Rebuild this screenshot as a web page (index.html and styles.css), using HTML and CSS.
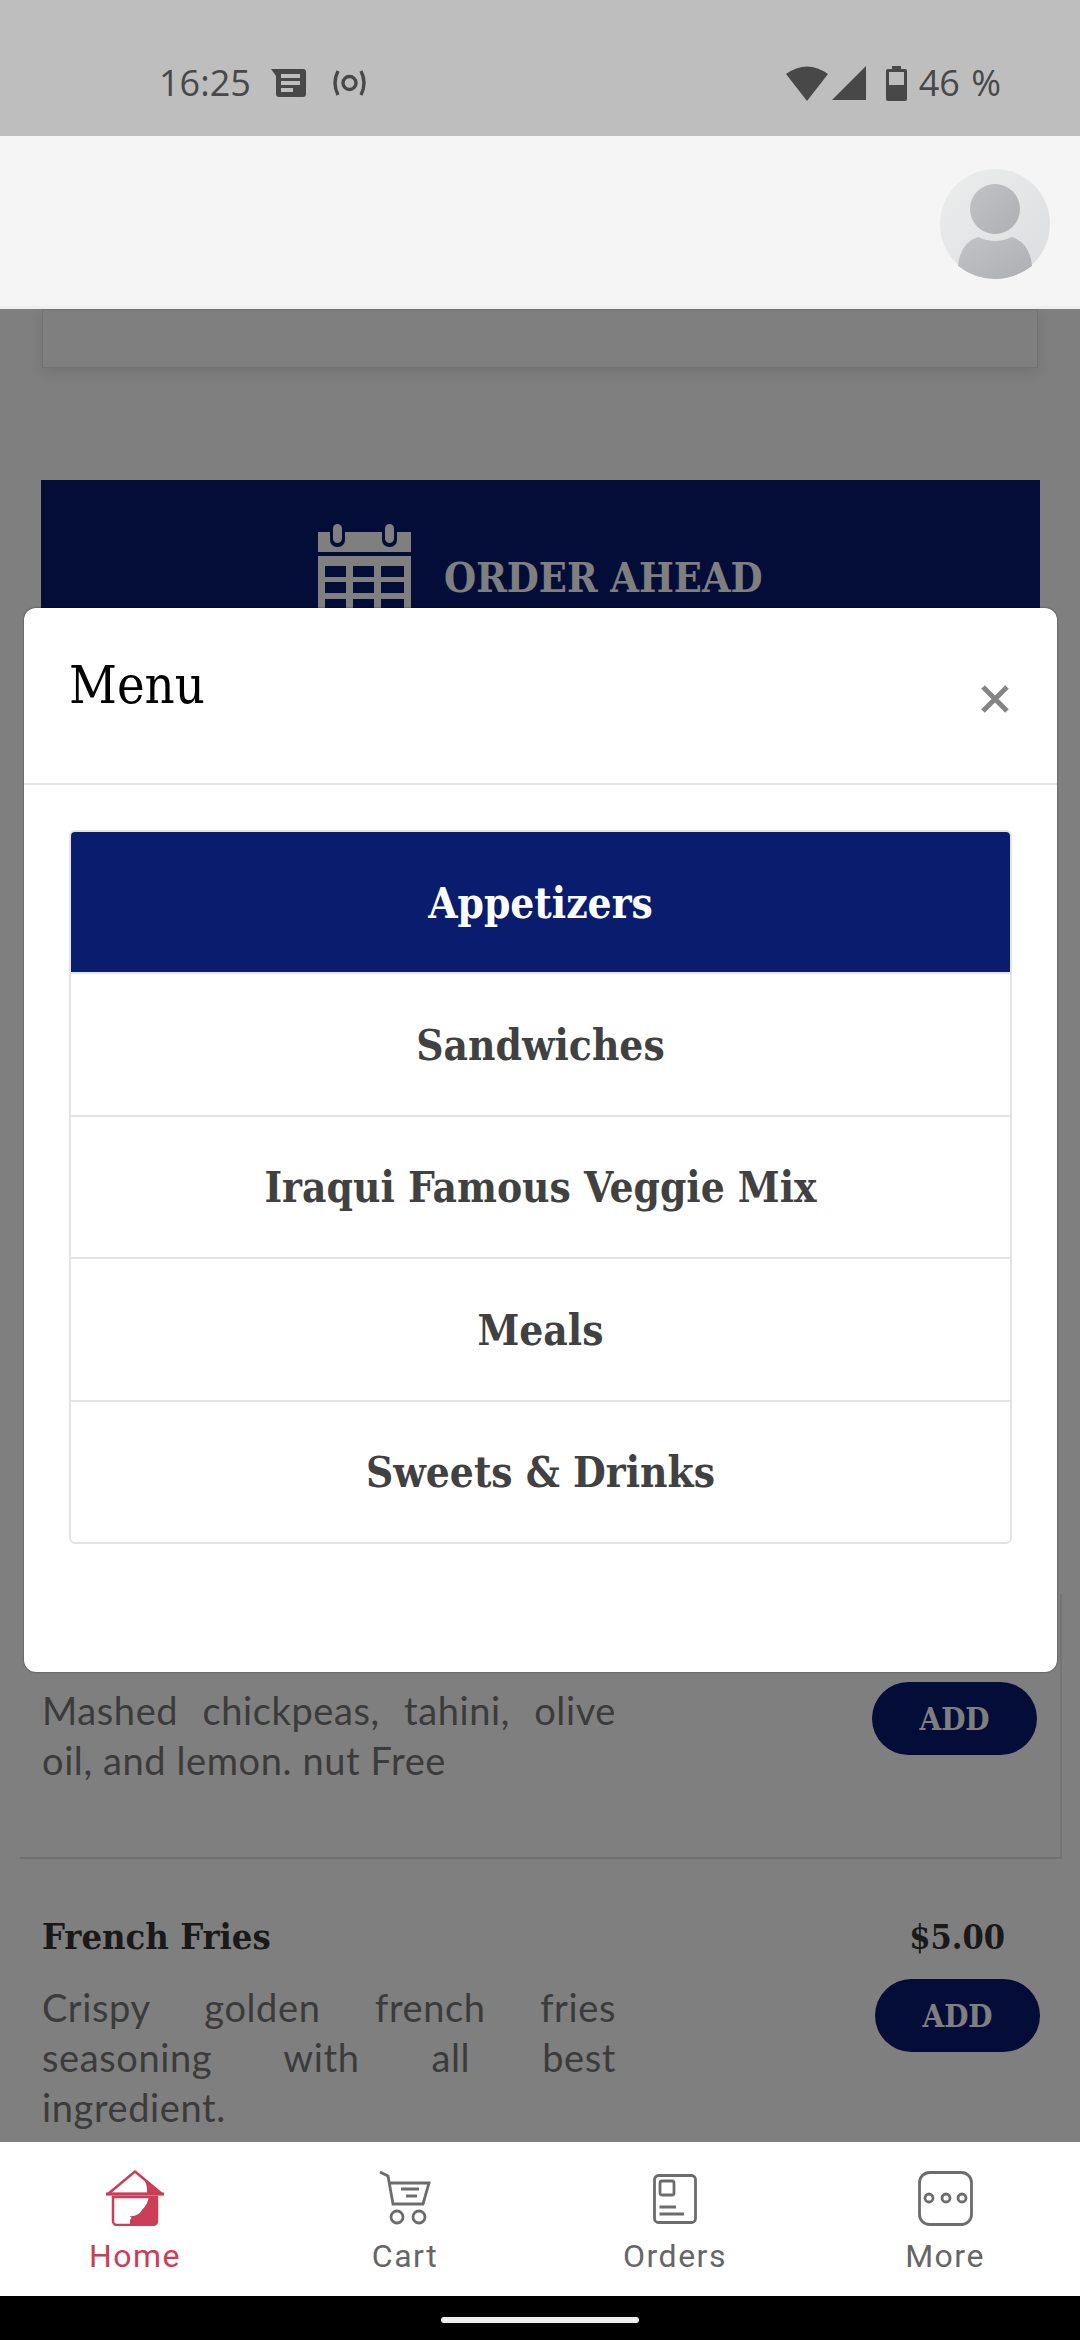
FILE: index.html
```html
<!DOCTYPE html>
<html lang="en">
<head>
    <meta charset="UTF-8">
    <meta name="viewport" content="width=device-width, initial-scale=1.0">
    <title>Menu</title>
    <link rel="stylesheet" href="styles.css">
</head>
<body>
    <div class="status-bar">
        <div class="status-left">
            <span class="status-text">16:25</span>
            <svg class="icon-msg" width="35" height="28" viewBox="0 0 35 28"><path d="M0 0H32a3 3 0 0 1 3 3V25a3 3 0 0 1-3 3H8a3 3 0 0 1-3-3V7Z" fill="#484848"/><path d="M10 5H29V9H10ZM10 12H29V16H10ZM10 19H22V23H10Z" fill="#bebebe"/></svg>
            <svg class="icon-hotspot" width="35" height="28" viewBox="0 0 35 28" fill="none" stroke="#484848" stroke-width="3.4"><circle cx="17.5" cy="14" r="6.5"/><path d="M6 2Q0 14 6 26M29 2Q35 14 29 26"/></svg>
        </div>
        <div class="status-right">
            <svg width="42" height="35" viewBox="0 0 42 35"><path d="M0 8Q21 -7 42 8L21 35Z" fill="#484848"/></svg>
            <svg class="icon-signal" width="34" height="34" viewBox="0 0 34 34"><path d="M34 0V34H0Z" fill="#484848"/></svg>
            <svg class="icon-battery" width="21" height="35" viewBox="0 0 21 35"><path d="M6 0H15V3H19a2 2 0 0 1 2 2V33a2 2 0 0 1-2 2H2a2 2 0 0 1-2-2V5a2 2 0 0 1 2-2H6Z" fill="#484848"/><rect x="3" y="6" width="15" height="13" fill="#bebebe"/></svg>
            <span class="status-text battery-text">46 %</span>
        </div>
    </div>

    <header class="top-bar">
        <div class="avatar">
            <svg width="110" height="110" viewBox="0 0 110 110">
                <defs>
                    <linearGradient id="av-bg" x1="0" y1="0" x2="1" y2="1"><stop offset="0" stop-color="#eceded"/><stop offset="1" stop-color="#dcdddf"/></linearGradient>
                    <linearGradient id="av-fg" x1="0" y1="0" x2="1" y2="1"><stop offset="0" stop-color="#c2c3c5"/><stop offset="1" stop-color="#aeafb3"/></linearGradient>
                </defs>
                <circle cx="55" cy="55" r="55" fill="url(#av-bg)"/>
                <ellipse cx="55" cy="40" rx="25" ry="25" fill="url(#av-fg)"/>
                <path d="M38 68Q55 76 72 68Q90 74 92 97Q75 110 55 110Q35 110 18 97Q20 74 38 68Z" fill="url(#av-fg)"/>
            </svg>
        </div>
    </header>

    <main class="content">
        <div class="promo-card"></div>

        <section class="order-banner">
            <svg class="calendar-icon" width="93" height="110" viewBox="0 0 93 110">
                <path d="M0 8H93V28H0Z" fill="#fff"/>
                <rect x="12" y="0" width="15" height="23" rx="7" fill="#061a70"/>
                <rect x="64" y="0" width="15" height="23" rx="7" fill="#061a70"/>
                <rect x="15" y="0" width="9" height="19" rx="4.5" fill="#fff"/>
                <rect x="67" y="0" width="9" height="19" rx="4.5" fill="#fff"/>
                <path d="M0 32H93V110H0ZM7 42V53H28V42ZM35 42V53H56V42ZM63 42V53H86V42ZM7 58V69H28V58ZM35 58V69H56V58ZM63 58V69H86V58ZM7 75V86H28V75ZM35 75V86H56V75ZM63 75V86H86V75ZM7 92V103H28V92ZM35 92V103H56V92ZM63 92V103H86V92Z" fill="#fff" fill-rule="evenodd"/>
            </svg>
            <span class="order-title">ORDER AHEAD</span>
        </section>

        <section class="menu-item first-item">
            <div class="item-row">
                <p class="item-desc">Mashed chickpeas, tahini, olive oil, and lemon. nut Free</p>
                <button class="add-btn">ADD</button>
            </div>
        </section>

        <section class="menu-item second-item">
            <div class="item-head">
                <h3 class="item-name">French Fries</h3>
                <span class="item-price">$5.00</span>
            </div>
            <div class="item-row">
                <p class="item-desc">Crispy golden french fries seasoning with all best ingredient.</p>
                <button class="add-btn">ADD</button>
            </div>
        </section>

        <div class="overlay"></div>

        <div class="modal">
            <div class="modal-header">
                <h2 class="modal-title">Menu</h2>
                <svg class="modal-close" width="30" height="30" viewBox="0 0 30 30"><path d="M3 3L27 27M27 3L3 27" stroke="#858585" stroke-width="5"/></svg>
            </div>
            <div class="modal-body">
                <ul class="category-list">
                    <li class="category active">Appetizers</li>
                    <li class="category">Sandwiches</li>
                    <li class="category">Iraqui Famous Veggie Mix</li>
                    <li class="category">Meals</li>
                    <li class="category">Sweets &amp; Drinks</li>
                </ul>
            </div>
        </div>
    </main>

    <nav class="tab-bar">
        <div class="tab tab-active">
            <svg width="58" height="56" viewBox="0 0 58 56">
                <path d="M29 1.500L2 24H56Z" fill="none" stroke="#cc3d57" stroke-width="2.5" stroke-linejoin="round"/>
                <path d="M36 6L56 24H41Q42 14 36 6Z" fill="#cc3d57"/>
                <rect x="0" y="22.5" width="58" height="3" fill="#cc3d57"/>
                <path d="M7 27H51V51a4 4 0 0 1-4 4H11a4 4 0 0 1-4-4Z" fill="#fff" stroke="#cc3d57" stroke-width="2.5"/>
                <path d="M43 26H51V51a4 4 0 0 1-4 4H24V50Q27 47 23 46Q32 47 36 40Q42 34 43 26Z" fill="#cc3d57"/>
            </svg>
            <span class="tab-label">Home</span>
        </div>
        <div class="tab">
            <svg width="52" height="56" viewBox="0 0 52 56" fill="none" stroke="#6c6c6c" stroke-width="2.8">
                <path d="M1 2L9 6L14 34H44L50 13H11"/>
                <path d="M22 19H40M27 26H38"/>
                <circle cx="18" cy="47" r="6"/>
                <circle cx="40" cy="47" r="6"/>
            </svg>
            <span class="tab-label">Cart</span>
        </div>
        <div class="tab">
            <svg width="44" height="56" viewBox="0 0 44 56" fill="none" stroke="#6c6c6c" stroke-width="2.8">
                <rect x="1.500" y="5.500" width="41" height="47" rx="4"/>
                <rect x="7" y="11" width="14" height="14" rx="2"/>
                <path d="M6.500 37H23M6.500 44H31"/>
            </svg>
            <span class="tab-label">Orders</span>
        </div>
        <div class="tab">
            <svg width="55" height="56" viewBox="0 0 55 56" fill="none" stroke="#6c6c6c" stroke-width="2.8">
                <rect x="1.500" y="2.500" width="52" height="52" rx="10"/>
                <circle cx="11" cy="28" r="4"/>
                <circle cx="28" cy="28" r="4"/>
                <circle cx="44" cy="28" r="4"/>
            </svg>
            <span class="tab-label">More</span>
        </div>
    </nav>

    <div class="nav-bar"><div class="home-pill"></div></div>
</body>
</html>
```

FILE: styles.css
```css
* {
    box-sizing: border-box;
}
html, body {
    margin: 0;
    padding: 0;
}
body {
    width: 1080px;
    height: 2340px;
    display: flex;
    flex-direction: column;
    overflow: hidden;
    font-family: Roboto, sans-serif;
    background-color: #fff;
}

/* status bar */
.status-bar {
    height: 136px;
    flex: none;
    display: flex;
    justify-content: space-between;
    align-items: center;
    padding: 30px 79px 0 159px;
    background-color: #bebebe;
    color: #484848;
}
.status-left, .status-right {
    display: flex;
    align-items: center;
}
.status-text {
    font-family: "Open Sans", sans-serif;
    font-weight: 500;
    font-size: 36px;
    line-height: 40px;
}
.icon-msg {
    margin-left: 20px;
}
.icon-hotspot {
    margin-left: 26px;
}
.icon-signal {
    margin-left: 4px;
}
.icon-battery {
    margin-left: 20px;
}
.battery-text {
    margin-left: 12px;
    word-spacing: 2px;
}

/* top bar */
.top-bar {
    height: 173px;
    flex: none;
    display: flex;
    justify-content: flex-end;
    padding: 33px 30px 0 0;
    background-color: #f5f5f5;
    border-bottom: 3px solid #efefef;
    position: relative;
    z-index: 3;
}
.avatar {
    width: 110px;
    height: 110px;
}

/* page under the modal */
.content {
    flex: 1;
    position: relative;
    overflow: hidden;
    background-color: #fff;
}
.promo-card {
    width: 996px;
    height: 59px;
    margin-left: 42px;
    background-color: #fff;
    border: 1px solid #e4e4e4;
    box-shadow: 0 4px 14px rgba(0, 0, 0, 0.12);
}
.order-banner {
    width: 999px;
    height: 240px;
    margin: 112px 0 0 41px;
    display: flex;
    align-items: flex-start;
    padding: 44px 0 0 277px;
    background-color: #061a70;
}
.calendar-icon {
    flex: none;
}
.order-title {
    margin: 28px 0 0 33px;
    font-family: "DejaVu Serif Condensed", "DejaVu Serif", serif;
    font-weight: bold;
    font-size: 41px;
    line-height: 52px;
    color: #fff;
}
.menu-item {
    background-color: #fff;
}
.first-item {
    width: 1042px;
    height: 265px;
    margin: 874px 0 0 20px;
    padding: 88px 23px 0 22px;
    border-right: 2px solid #e8e8e8;
    border-bottom: 2px solid #e0e0e0;
}
.second-item {
    padding: 52px 40px 0 42px;
}
.item-head {
    display: flex;
    justify-content: space-between;
    align-items: baseline;
    padding-right: 35px;
}
.item-name, .item-price {
    margin: 0;
    font-family: "DejaVu Serif Condensed", "DejaVu Serif", serif;
    font-weight: bold;
    font-size: 36px;
    line-height: 50px;
    color: #333;
}
.item-price {
    font-size: 34px;
}
.item-row {
    display: flex;
    justify-content: space-between;
    align-items: flex-start;
}
.second-item .item-row {
    margin-top: 17px;
}
.item-desc {
    width: 574px;
    margin: 0;
    padding-top: 3px;
    font-family: Lato, sans-serif;
    font-size: 38px;
    letter-spacing: 0.6px;
    line-height: 50px;
    text-align: justify;
    color: #777;
}
.add-btn {
    width: 165px;
    height: 73px;
    flex: none;
    border: none;
    border-radius: 37px;
    background-color: #061a70;
    color: #fff;
    font-family: "DejaVu Serif Condensed", "DejaVu Serif", serif;
    font-weight: bold;
    font-size: 31px;
    padding: 0;
}

/* modal */
.overlay {
    position: absolute;
    inset: 0;
    background-color: rgba(0, 0, 0, 0.5);
}
.modal {
    position: absolute;
    left: 24px;
    top: 299px;
    width: 1033px;
    height: 1064px;
    background-color: #fff;
    border-radius: 12px;
    box-shadow: 0 0 2px rgba(0, 0, 0, 0.6);
}
.modal-header {
    height: 177px;
    display: flex;
    justify-content: space-between;
    align-items: flex-start;
    padding: 45px 47px 0 45px;
    border-bottom: 2px solid #e3e3e3;
}
.modal-title {
    margin: 0;
    font-family: "DejaVu Serif Condensed", "DejaVu Serif", serif;
    font-weight: normal;
    font-size: 52px;
    line-height: 64px;
    color: #000;
}
.modal-close {
    margin-top: 31px;
}
.modal-body {
    padding: 45px;
}
.category-list {
    list-style: none;
    margin: 0;
    padding: 0;
    border: 2px solid #e3e3e3;
    border-radius: 6px;
    overflow: hidden;
}
.category {
    height: 142.5px;
    display: flex;
    align-items: center;
    justify-content: center;
    padding-top: 2px;
    font-family: "DejaVu Serif Condensed", "DejaVu Serif", serif;
    font-weight: bold;
    font-size: 42px;
    color: #414141;
    border-top: 2px solid #e3e3e3;
}
.category:first-child {
    border-top: none;
    height: 140px;
}
.category.active {
    background-color: #0a1c6e;
    color: #fff;
}

/* bottom tabs */
.tab-bar {
    height: 154px;
    flex: none;
    display: grid;
    grid-template-columns: repeat(4, 270px);
    background-color: #fff;
    position: relative;
    z-index: 3;
}
.tab {
    display: flex;
    flex-direction: column;
    align-items: center;
    justify-content: flex-end;
    height: 136px;
}
.tab-label {
    margin-top: 8px;
    font-size: 32px;
    line-height: 44px;
    letter-spacing: 1.5px;
    color: #666;
}
.tab-active .tab-label {
    color: #cc3d57;
}
.nav-bar {
    height: 44px;
    flex: none;
    display: flex;
    justify-content: center;
    padding-top: 21px;
    background-color: #000;
}
.home-pill {
    width: 198px;
    height: 6px;
    border-radius: 3px;
    background-color: #eee;
}
```
